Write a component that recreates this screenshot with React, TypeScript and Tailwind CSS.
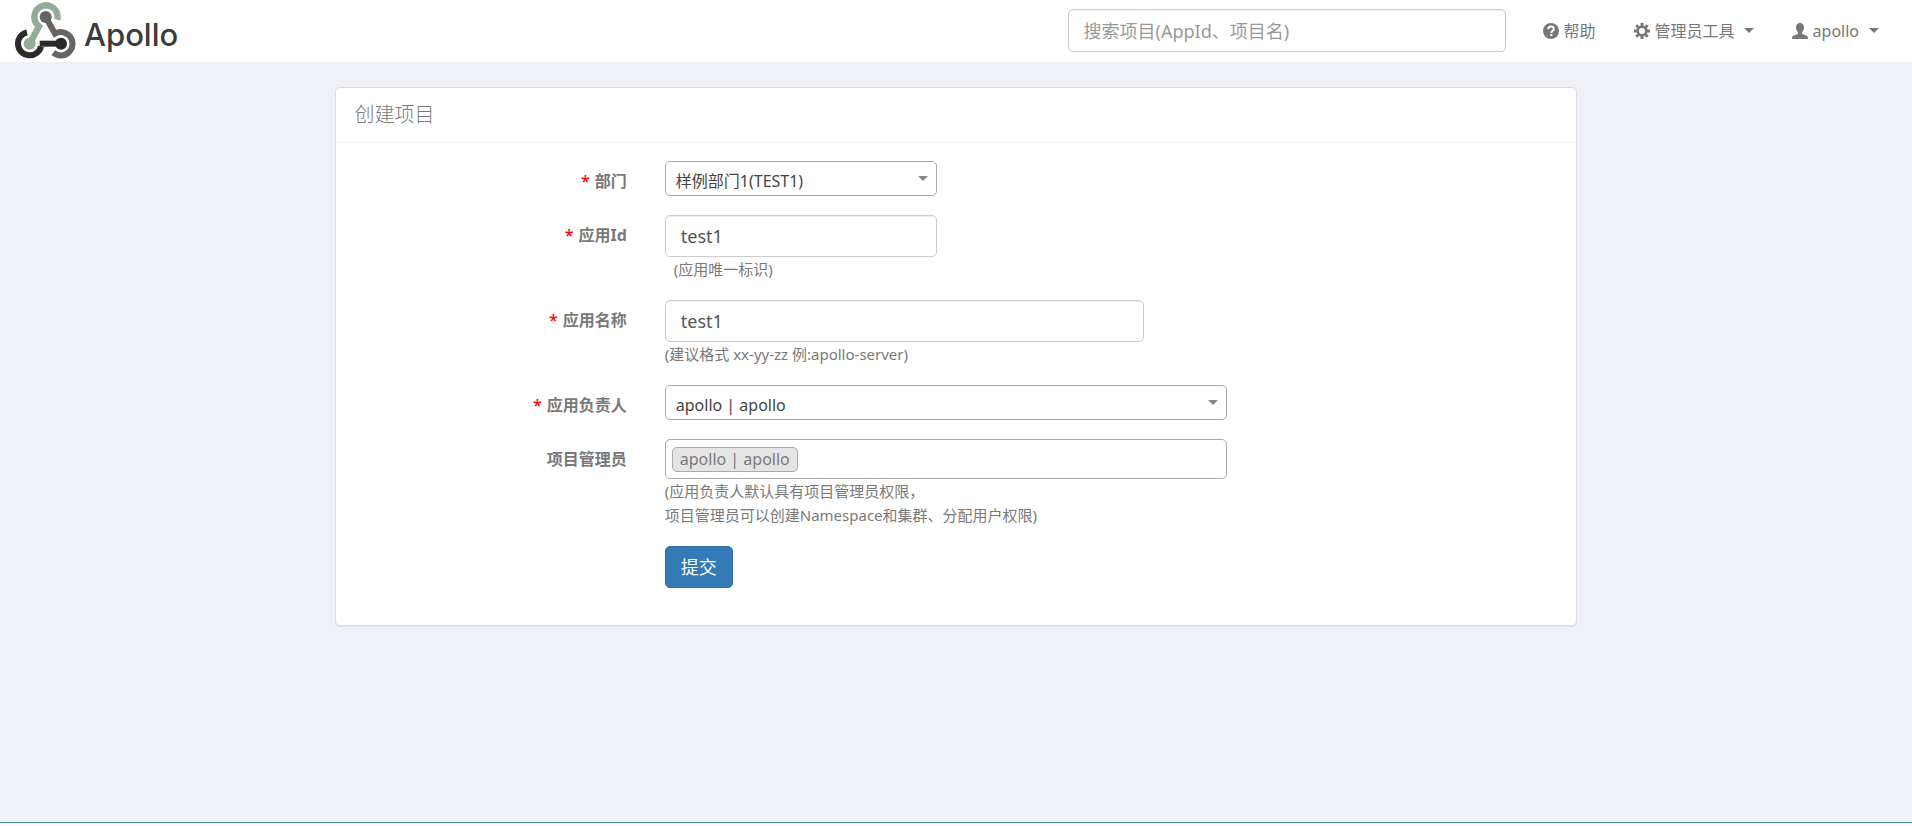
import type { ReactNode } from "react";

const inputClass =
  "block h-[42px] w-full rounded-[5px] border border-[#ccc] bg-white px-[15px] text-lg text-[#555] shadow-[inset_0_1px_1px_rgba(0,0,0,0.075)] outline-none placeholder:text-[#999]";

const selectClass =
  "block h-[35px] w-full appearance-none rounded-[5px] border border-[#aaa] bg-white pt-1 pr-8 pl-[10px] text-base leading-6 text-[#444] outline-none";

function Caret({ className }: { className: string }) {
  return (
    <svg viewBox="0 0 10 5" className={className} fill="currentColor" aria-hidden="true">
      <path d="M0 0h10L5 5z" />
    </svg>
  );
}

function Logo() {
  return (
    <a href="#" className="flex h-full items-center" aria-label="Apollo">
      <svg viewBox="14 5 183 171" className="h-[57px] w-[61px]" fill="none" aria-hidden="true">
        <g strokeWidth="18">
          <path stroke="#2b2a29" d="M50 96A35 35 0 1 0 92 138" />
          <path stroke="#2b2a29" d="M88 130H150" />
          <path stroke="#666564" d="M129 157A35 35 0 1 0 134 100L106 50" />
          <path stroke="#93ac9a" strokeWidth="19" d="M141 58A35 35 0 1 0 86 78L58 130" />
        </g>
        <circle cx="106" cy="50" r="18" fill="#666564" />
        <circle cx="58" cy="130" r="18" fill="#93ac9a" />
        <circle cx="152" cy="130" r="18" fill="#2b2a29" />
      </svg>
      <span className="mt-2 ml-2 font-['Inter',sans-serif] text-[31px] leading-10 font-medium text-[#3c3b3a]">
        Apollo
      </span>
    </a>
  );
}

function Navbar() {
  return (
    <nav className="flex h-[62px] items-center justify-between bg-white pr-[33px] pb-px pl-[15px]">
      <Logo />
      <div className="flex items-center text-base text-[#777]">
        <input
          type="text"
          aria-label="搜索项目"
          placeholder="搜索项目(AppId、项目名)"
          className="h-[43px] w-[438px] rounded-[5px] border border-[#ccc] px-[15px] text-lg shadow-[inset_0_1px_1px_rgba(0,0,0,0.075)] outline-none placeholder:text-[#999]"
        />
        <a href="#" className="ml-[37px] flex items-center gap-[5px]">
          <svg viewBox="0 0 16 16" className="size-4" aria-hidden="true">
            <circle cx="8" cy="8" r="8" fill="currentColor" />
            <path d="M5.300 6.200C5.300 4.300 6.400 3.500 8 3.500s2.800.9 2.800 2.400c0 1.900-2.500 2-2.500 4" fill="none" stroke="#fff" strokeWidth="2" />
            <path d="M7.200 11h2.200v2H7.200z" fill="#fff" />
          </svg>
          帮助
        </a>
        <button type="button" className="ml-[38px] flex items-center gap-[5px]">
          <svg viewBox="0 0 16 16" className="size-4" fill="none" stroke="currentColor" aria-hidden="true">
            <circle cx="8" cy="8" r="4.300" strokeWidth="2.600" />
            <path strokeWidth="3" d="M8 0v3M8 13v3M0 8h3M13 8h3M2.300 2.300l2 2M11.700 11.700l2 2M2.300 13.700l2-2M11.700 4.300l2-2" />
          </svg>
          管理员工具
          <Caret className="ml-1 h-[5px] w-[10px]" />
        </button>
        <button type="button" className="ml-[38px] flex items-center gap-[5px]">
          <svg viewBox="0 0 16 16" className="size-4" fill="currentColor" aria-hidden="true">
            <path d="M8 0c2.600 0 4 1.800 4 4.200 0 2.200-.8 3.800-2 4.900v1.400c0 .8 5.200 1.700 5.900 3.700.1.500.1 1.200.1 1.800H0c0-.6 0-1.300.1-1.800.7-2 5.900-2.900 5.900-3.700V9.100C4.800 8 4 6.400 4 4.200 4 1.800 5.400 0 8 0z" />
          </svg>
          apollo
          <Caret className="ml-[5px] h-[5px] w-[10px]" />
        </button>
      </div>
    </nav>
  );
}

type FieldProps = {
  label: string;
  htmlFor: string;
  required?: boolean;
  width: string;
  hint?: ReactNode;
  children: ReactNode;
};

function Field({ label, htmlFor, required, width, hint, children }: FieldProps) {
  return (
    <div className="mb-[19px] flex">
      <label htmlFor={htmlFor} className="w-1/4 px-[19px] pt-2 text-right text-base leading-6 font-bold">
        {required && <span className="mr-[5px] font-medium text-[red]">*</span>}
        {label}
      </label>
      <div className="w-3/4">
        <div className={width}>{children}</div>
        {hint && <div className="px-[19px] text-[15px] leading-6">{hint}</div>}
      </div>
    </div>
  );
}

export default function App() {
  return (
    <div className="flex min-h-screen flex-col bg-[#f0f1f6] font-['Noto_Sans','Noto_Sans_CJK_SC',sans-serif] text-[#797979]">
      <Navbar />

      <main className="flex-1 pt-[25px]">
        <section className="mx-auto w-[65%] rounded-[5px] border border-[#ddd] bg-white shadow-[0_1px_1px_rgba(0,0,0,0.05)]">
          <header className="h-[55px] border-b border-[#eff2f7] px-[19px] pt-[13px] text-xl leading-7 font-light">
            创建项目
          </header>

          <form className="pt-[18px] pb-[37px]" onSubmit={(e) => e.preventDefault()}>
            <Field label="部门" htmlFor="org" required width="w-1/3 px-[19px]">
              <div className="relative">
                <select id="org" className={selectClass}>
                  <option>样例部门1(TEST1)</option>
                </select>
                <Caret className="pointer-events-none absolute top-[15px] right-[9px] h-[5px] w-[10px] text-[#888]" />
              </div>
            </Field>

            <Field
              label="应用Id"
              htmlFor="appId"
              required
              width="w-1/3 px-[19px]"
              hint={<span className="pl-[9px]">(应用唯一标识)</span>}
            >
              <input id="appId" type="text" defaultValue="test1" className={inputClass} />
            </Field>

            <Field
              label="应用名称"
              htmlFor="appName"
              required
              width="w-5/9 px-[19px]"
              hint="(建议格式 xx-yy-zz 例:apollo-server)"
            >
              <input id="appName" type="text" defaultValue="test1" className={inputClass} />
            </Field>

            <Field label="应用负责人" htmlFor="owner" required width="w-[600px] px-[19px]">
              <div className="relative">
                <select id="owner" className={selectClass}>
                  <option>apollo | apollo</option>
                </select>
                <Caret className="pointer-events-none absolute top-[15px] right-[9px] h-[5px] w-[10px] text-[#888]" />
              </div>
            </Field>

            <Field
              label="项目管理员"
              htmlFor="admins"
              width="w-[600px] px-[19px]"
              hint={
                <>
                  (应用负责人默认具有项目管理员权限，
                  <br />
                  项目管理员可以创建Namespace和集群、分配用户权限)
                </>
              }
            >
              <div className="flex h-10 items-center gap-2 rounded-[5px] border border-[#aaa] px-[6px]">
                <span className="rounded-[5px] border border-[#aaa] bg-[#e4e4e4] px-[7px] text-base leading-[23px]">
                  apollo | apollo
                </span>
                <input id="admins" type="text" className="h-6 min-w-0 flex-1 outline-none" />
              </div>
            </Field>

            <div className="ml-[25%] px-[19px]">
              <button
                type="submit"
                className="h-[42px] rounded-[5px] border border-[#2e6da4] bg-[#337ab7] px-[15px] text-lg leading-6 text-white"
              >
                提交
              </button>
            </div>
          </form>
        </section>
      </main>

      <footer className="h-1 border-t border-[#4b9781] bg-white" />
    </div>
  );
}
